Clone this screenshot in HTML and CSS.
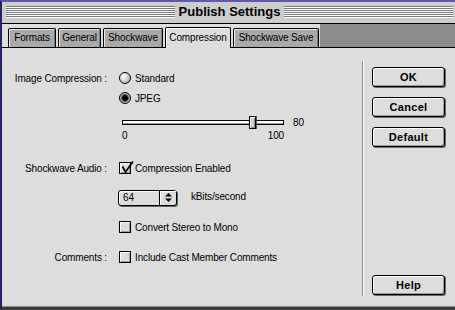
FILE: index.html
```html
<!DOCTYPE html>
<html>
<head>
<meta charset="utf-8">
<title>Publish Settings</title>
<link rel="stylesheet" href="styles.css">
</head>
<body>
<div class="window">
  <div class="titlebar">
    <span class="stripes"></span>
    <span class="title">Publish Settings</span>
    <span class="stripes"></span>
  </div>
  <div class="tabstrip">
    <div class="tab t-formats">Formats</div>
    <div class="tab t-general">General</div>
    <div class="tab t-shockwave">Shockwave</div>
    <div class="tab t-compression active">Compression</div>
    <div class="tab t-save">Shockwave Save</div>
    <div class="tabfill"></div>
  </div>
  <div class="content">
    <div class="panel">
      <div class="row r-image">
        <span class="label">Image Compression :</span>
        <span class="opt"><span class="radio"></span>Standard</span>
      </div>
      <div class="row r-jpeg">
        <span></span>
        <span class="opt"><span class="radio on"></span>JPEG</span>
      </div>
      <div class="srow">
        <span></span>
        <div class="sbox">
          <div class="sline">
            <div class="slider">
              <div class="track"></div>
              <div class="thumb" style="left: 80%"></div>
            </div>
            <span class="svalue">80</span>
          </div>
          <div class="scale"><span>0</span><span>100</span></div>
        </div>
      </div>
      <div class="row r-audio">
        <span class="label">Shockwave Audio :</span>
        <span class="opt"><span class="checkbox"><svg class="check" width="17" height="16" viewBox="0 0 17 16"><polyline points="3.5,6.5 6.5,12 14,1.5" fill="none" stroke="#000" stroke-width="1.7"/></svg></span>Compression Enabled</span>
      </div>
      <div class="row r-popup">
        <span></span>
        <span class="popline">
          <span class="popup">
            <span class="pval">64</span>
            <span class="parrows"><svg width="7" height="9" viewBox="0 0 7 9"><polygon points="3.5,0 7,3.5 0,3.5" fill="#000"/><polygon points="0,5.5 7,5.5 3.5,9" fill="#000"/></svg></span>
          </span>
          <span class="unit">kBits/second</span>
        </span>
      </div>
      <div class="row r-convert">
        <span></span>
        <span class="opt"><span class="checkbox"></span>Convert Stereo to Mono</span>
      </div>
      <div class="row r-comments">
        <span class="label">Comments :</span>
        <span class="opt"><span class="checkbox"></span>Include Cast Member Comments</span>
      </div>
    </div>
    <div class="divider"></div>
    <div class="buttons">
      <div class="btn">OK</div>
      <div class="btn">Cancel</div>
      <div class="btn">Default</div>
      <div class="btn help">Help</div>
    </div>
  </div>
</div>
</body>
</html>
```
FILE: styles.css
```css
html, body {
  margin: 0;
  padding: 0;
}
body {
  width: 455px;
  height: 310px;
  overflow: hidden;
  background: #2a2a5e;
  font-family: "Liberation Sans", Arial, sans-serif;
  font-size: 10px;
  letter-spacing: -0.15px;
  color: #000;
}
.window {
  box-sizing: border-box;
  width: 455px;
  height: 310px;
  display: flex;
  flex-direction: column;
  border-top: 2px solid #5c5ca6;
  border-left: 2px solid #23235e;
  border-bottom: 3px solid #3c3c3c;
  background: #dddddd;
}
.titlebar {
  box-sizing: border-box;
  height: 22px;
  flex: none;
  display: flex;
  align-items: flex-start;
  padding: 4px 2px 0 4px;
  background: #cdcdcd;
  border-bottom: 1px solid #000;
}
.stripes {
  flex: 1;
  height: 12px;
  background: repeating-linear-gradient(to bottom, #7a7a7a 0 1px, #ffffff 1px 2px);
}
.title {
  font-weight: bold;
  font-size: 13px;
  letter-spacing: 0;
  line-height: 14px;
  margin-top: -1px;
  padding: 0 4px;
  white-space: nowrap;
}
.tabstrip {
  box-sizing: border-box;
  height: 24px;
  flex: none;
  display: flex;
  align-items: flex-end;
  padding-left: 6px;
  background: #dddddd;
  border-bottom: 1px solid #000;
}
.tab {
  box-sizing: border-box;
  height: 19px;
  margin-left: 2px;
  border: 1px solid #000;
  border-bottom: none;
  border-radius: 2px 2px 0 0;
  background: #a9a9a9;
  box-shadow: inset 1px 1px 0 #e6e6e6, inset -1px 0 0 #7a7a7a;
  text-align: center;
  line-height: 18px;
  white-space: nowrap;
}
.t-formats { width: 48px; margin-left: 0; }
.t-general { width: 43px; }
.t-shockwave { width: 60px; }
.t-compression { width: 66px; }
.t-save { width: 86px; }
.tab.active {
  height: 21px;
  line-height: 20px;
  margin-bottom: -1px;
  background: #dddddd;
  box-shadow: inset 1px 1px 0 #ffffff;
  position: relative;
}
.tabfill {
  flex: 1;
  align-self: stretch;
  margin-left: 1px;
  background: #8c8c8c;
}
.content {
  flex: 1;
  display: flex;
  background: #dddddd;
  border-bottom: 1px solid #8a8a8a;
}
.panel {
  box-sizing: border-box;
  width: 360px;
  flex: none;
  padding-top: 23px;
}
.row {
  display: grid;
  grid-template-columns: 105px auto;
  column-gap: 12px;
  align-items: center;
  height: 14px;
}
.label {
  text-align: right;
  white-space: nowrap;
}
.opt {
  display: flex;
  align-items: center;
  gap: 4px;
  white-space: nowrap;
}
.r-jpeg { margin-top: 6px; }
.srow {
  display: grid;
  grid-template-columns: 105px auto;
  column-gap: 12px;
  margin-top: 11px;
}
.sbox {
  display: flex;
  flex-direction: column;
}
.sline {
  display: flex;
  align-items: center;
  height: 13px;
}
.slider {
  position: relative;
  width: 162px;
  height: 13px;
  margin-left: 3px;
  display: flex;
  align-items: center;
}
.track {
  box-sizing: border-box;
  width: 100%;
  height: 5px;
  border: 1px solid #000;
  background: #ffffff;
  box-shadow: inset 0 -1px 0 #9a9a9a;
}
.thumb {
  position: absolute;
  top: 0;
  margin-left: -3px;
  box-sizing: border-box;
  width: 7px;
  height: 13px;
  border: 1px solid #000;
  background: #cfcfcf;
  box-shadow: inset 1px 1px 0 #ffffff, inset -1px -1px 0 #8a8a8a, 1px 0 0 #555;
}
.svalue {
  margin-left: 9px;
}
.scale {
  width: 162px;
  margin-left: 3px;
  margin-top: 2px;
  display: flex;
  justify-content: space-between;
  line-height: 10px;
}
.r-audio { margin-top: 20px; }
.r-popup { margin-top: 14px; height: 17px; }
.r-convert { margin-top: 14px; }
.r-comments { margin-top: 16px; }
.radio {
  box-sizing: border-box;
  width: 12px;
  height: 12px;
  flex: none;
  border: 1px solid #000;
  border-radius: 50%;
  background: radial-gradient(circle at 35% 35%, #ffffff 0, #e4e4e4 30%, #a0a0a0 100%);
}
.radio.on {
  background: radial-gradient(circle, #000 0 2.6px, #444 3px 3.4px, #b0b0b0 4px);
}
.checkbox {
  position: relative;
  box-sizing: border-box;
  width: 12px;
  height: 12px;
  flex: none;
  border: 1px solid #000;
  background: #dddddd;
  box-shadow: inset 1px 1px 0 #ffffff, inset -1px -1px 0 #9a9a9a;
}
.check {
  position: absolute;
  left: -1px;
  top: -3px;
  overflow: visible;
}
.popline {
  display: flex;
  align-items: center;
}
.popup {
  box-sizing: border-box;
  margin-left: -1px;
  width: 59px;
  height: 16px;
  display: flex;
  border: 1px solid #000;
  border-radius: 3px;
  background: #dddddd;
  box-shadow: inset 1px 1px 0 #ffffff, 1px 1px 0 #666;
}
.pval {
  flex: 1;
  padding-left: 4px;
  line-height: 14px;
}
.parrows {
  width: 16px;
  border-left: 1px solid #000;
  display: flex;
  align-items: center;
  justify-content: center;
  box-shadow: inset 1px 1px 0 #ffffff;
}
.unit {
  margin-left: 14px;
  margin-top: -3px;
}
.divider {
  width: 1px;
  flex: none;
  margin: 13px 0 10px 0;
  background: #8c8c8c;
  border-right: 1px solid #ffffff;
}
.buttons {
  flex: 1;
  display: flex;
  flex-direction: column;
  gap: 10px;
  padding: 19px 0 11px 8px;
}
.btn {
  box-sizing: border-box;
  width: 73px;
  height: 20px;
  border: 1px solid #000;
  border-radius: 3px;
  background: #dddddd;
  box-shadow: inset 1px 1px 0 #ffffff, inset -1px -1px 0 #9a9a9a, 1px 1px 0 #666;
  font-weight: bold;
  font-size: 11px;
  letter-spacing: 0.3px;
  line-height: 18px;
  text-align: center;
}
.btn.help {
  margin-top: auto;
}
```
